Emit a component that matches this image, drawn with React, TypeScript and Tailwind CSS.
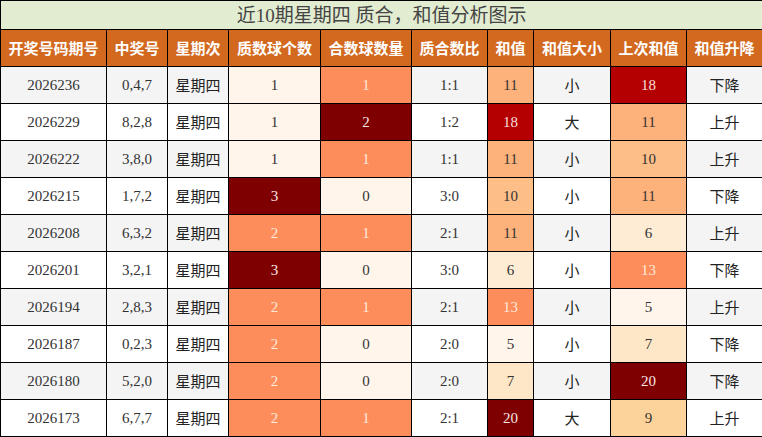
const rows: [string, string, number, number, string, number, string, number, string][] = [
  ["2026236", "0,4,7", 1, 1, "1:1", 11, "小", 18, "下降"],
  ["2026229", "8,2,8", 1, 2, "1:2", 18, "大", 11, "上升"],
  ["2026222", "3,8,0", 1, 1, "1:1", 11, "小", 10, "上升"],
  ["2026215", "1,7,2", 3, 0, "3:0", 10, "小", 11, "下降"],
  ["2026208", "6,3,2", 2, 1, "2:1", 11, "小", 6, "上升"],
  ["2026201", "3,2,1", 3, 0, "3:0", 6, "小", 13, "下降"],
  ["2026194", "2,8,3", 2, 1, "2:1", 13, "小", 5, "上升"],
  ["2026187", "0,2,3", 2, 0, "2:0", 5, "小", 7, "下降"],
  ["2026180", "5,2,0", 2, 0, "2:0", 7, "小", 20, "下降"],
  ["2026173", "6,7,7", 2, 1, "2:1", 20, "大", 9, "上升"],
];

const headers = ["开奖号码期号", "中奖号", "星期次", "质数球个数", "合数球数量", "质合数比", "和值", "和值大小", "上次和值", "和值升降"];
const widths = ["w-[106px]", "w-[61px]", "w-[61px]", "w-[92px]", "w-[91px]", "w-[76px]", "w-[46px]", "w-[77px]", "w-[76px]", "w-[76px]"];

// heat colours for the ball-count columns
const primeCls = (n: number) =>
  n === 1 ? "bg-[#fff5eb] text-[#333]" : n === 2 ? "bg-[#fd8d5a] text-[#fde8dc]" : "bg-[#7f0000] text-[#f6e6e6]";
const compCls = (n: number) =>
  n === 0 ? "bg-[#fff5eb] text-[#333]" : n === 1 ? "bg-[#fd8d5a] text-[#fde8dc]" : "bg-[#7f0000] text-[#f6e6e6]";

// heat colours for the sum columns
const sumCls = (n: number) => {
  switch (n) {
    case 5: return "bg-[#fff5eb] text-[#333]";
    case 6: return "bg-[#feecd5] text-[#333]";
    case 7: return "bg-[#fee7c7] text-[#333]";
    case 9: return "bg-[#fdd39c] text-[#333]";
    case 10: return "bg-[#fdbe88] text-[#333]";
    case 11: return "bg-[#fdb27c] text-[#333]";
    case 13: return "bg-[#fd8d5a] text-[#fde8dc]";
    case 18: return "bg-[#b40000] text-[#f8dede]";
    default: return "bg-[#7f0000] text-[#f6e6e6]";
  }
};

const serif = "font-['Liberation_Serif','Noto_Sans_CJK_SC',serif] text-[15px]";
const cjk = "font-['Noto_Sans_CJK_SC',sans-serif] text-[15px] text-[#222]";

export default function App() {
  return (
    <div className="w-[762px] h-[437px] bg-white overflow-hidden">
      <table className="table-fixed border-collapse w-[762px]">
        <colgroup>
          {widths.map((w, i) => (
            <col key={i} className={w} />
          ))}
        </colgroup>
        <thead>
          <tr className="h-[29px]">
            <th
              colSpan={10}
              className="border border-black bg-[#e2ecd1] p-0 font-normal text-[19px] leading-none text-[#444] font-['Liberation_Serif','Noto_Sans_CJK_SC',serif]"
            >
              近10期星期四 质合，和值分析图示
            </th>
          </tr>
          <tr className="h-[37px]">
            {headers.map((h) => (
              <th
                key={h}
                className="border border-black bg-[#d2691f] p-0 text-white font-bold text-[15px] font-['Noto_Sans_CJK_SC',sans-serif] whitespace-nowrap"
              >
                {h}
              </th>
            ))}
          </tr>
        </thead>
        <tbody>
          {rows.map((r, i) => {
            const bg = i % 2 === 0 ? "bg-[#f4f4f4]" : "bg-white";
            const td = "border border-black p-0 text-center";
            return (
              <tr key={r[0]} className="h-[37px]">
                <td className={`${td} ${bg} ${serif} text-[#333]`}>{r[0]}</td>
                <td className={`${td} ${bg} ${serif} text-[#333]`}>{r[1]}</td>
                <td className={`${td} ${bg} ${cjk}`}>星期四</td>
                <td className={`${td} ${serif} ${primeCls(r[2])}`}>{r[2]}</td>
                <td className={`${td} ${serif} ${compCls(r[3])}`}>{r[3]}</td>
                <td className={`${td} ${bg} ${serif} text-[#333]`}>{r[4]}</td>
                <td className={`${td} ${serif} ${sumCls(r[5])}`}>{r[5]}</td>
                <td className={`${td} ${bg} ${cjk}`}>{r[6]}</td>
                <td className={`${td} ${serif} ${sumCls(r[7])}`}>{r[7]}</td>
                <td className={`${td} ${bg} ${cjk}`}>{r[8]}</td>
              </tr>
            );
          })}
        </tbody>
      </table>
    </div>
  );
}
